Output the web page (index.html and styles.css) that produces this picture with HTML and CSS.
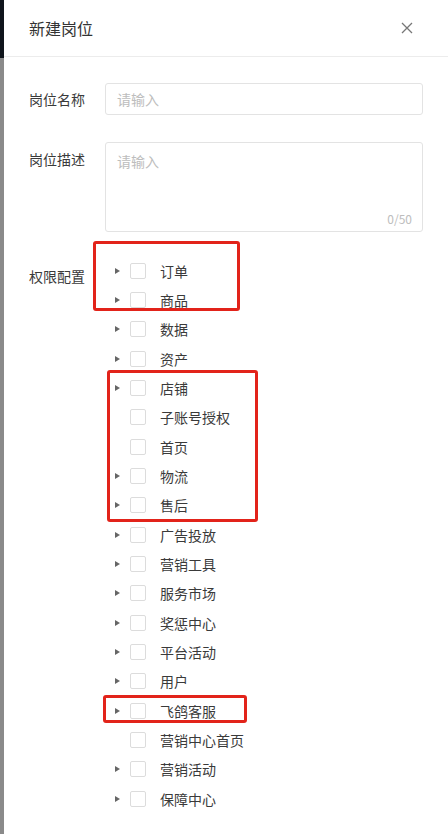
FILE: index.html
```html
<!DOCTYPE html>
<html lang="zh-CN">
<head>
<meta charset="utf-8">
<title>新建岗位</title>
<link rel="stylesheet" href="styles.css">
</head>
<body>
<div class="page">
  <div class="mask-strip"></div>
  <div class="drawer">
    <div class="drawer-header">
      <span class="drawer-title">新建岗位</span>
      <span class="close" aria-label="关闭">
        <svg width="12" height="12" viewBox="0 0 12 12"><path d="M1 1 L11 11 M11 1 L1 11" stroke="#777" stroke-width="1.3" fill="none"/></svg>
      </span>
    </div>
    <div class="drawer-body">
      <div class="form-row row-name">
        <label class="form-label">岗位名称</label>
        <div class="form-control">
          <div class="input"><span class="placeholder">请输入</span></div>
        </div>
      </div>
      <div class="form-row row-desc">
        <label class="form-label">岗位描述</label>
        <div class="form-control">
          <div class="textarea"><span class="placeholder">请输入</span><span class="count">0/50</span></div>
        </div>
      </div>
      <div class="form-row row-tree">
        <label class="form-label tree-label">权限配置</label>
        <div class="form-control">
          <ul class="tree">
            <li class="node"><span class="switcher"><i class="caret"></i></span><span class="checkbox"></span><span class="title">订单</span></li>
            <li class="node"><span class="switcher"><i class="caret"></i></span><span class="checkbox"></span><span class="title">商品</span></li>
            <li class="node"><span class="switcher"><i class="caret"></i></span><span class="checkbox"></span><span class="title">数据</span></li>
            <li class="node"><span class="switcher"><i class="caret"></i></span><span class="checkbox"></span><span class="title">资产</span></li>
            <li class="node"><span class="switcher"><i class="caret"></i></span><span class="checkbox"></span><span class="title">店铺</span></li>
            <li class="node"><span class="switcher"></span><span class="checkbox"></span><span class="title">子账号授权</span></li>
            <li class="node"><span class="switcher"></span><span class="checkbox"></span><span class="title">首页</span></li>
            <li class="node"><span class="switcher"><i class="caret"></i></span><span class="checkbox"></span><span class="title">物流</span></li>
            <li class="node"><span class="switcher"><i class="caret"></i></span><span class="checkbox"></span><span class="title">售后</span></li>
            <li class="node"><span class="switcher"><i class="caret"></i></span><span class="checkbox"></span><span class="title">广告投放</span></li>
            <li class="node"><span class="switcher"><i class="caret"></i></span><span class="checkbox"></span><span class="title">营销工具</span></li>
            <li class="node"><span class="switcher"><i class="caret"></i></span><span class="checkbox"></span><span class="title">服务市场</span></li>
            <li class="node"><span class="switcher"><i class="caret"></i></span><span class="checkbox"></span><span class="title">奖惩中心</span></li>
            <li class="node"><span class="switcher"><i class="caret"></i></span><span class="checkbox"></span><span class="title">平台活动</span></li>
            <li class="node"><span class="switcher"><i class="caret"></i></span><span class="checkbox"></span><span class="title">用户</span></li>
            <li class="node"><span class="switcher"><i class="caret"></i></span><span class="checkbox"></span><span class="title">飞鸽客服</span></li>
            <li class="node"><span class="switcher"></span><span class="checkbox"></span><span class="title">营销中心首页</span></li>
            <li class="node"><span class="switcher"><i class="caret"></i></span><span class="checkbox"></span><span class="title">营销活动</span></li>
            <li class="node"><span class="switcher"><i class="caret"></i></span><span class="checkbox"></span><span class="title">保障中心</span></li>
          </ul>
        </div>
      </div>
    </div>
    <div class="mark mark-1"></div>
    <div class="mark mark-2"></div>
    <div class="mark mark-3"></div>
  </div>
</div>
</body>
</html>
```

FILE: styles.css
```css
* { box-sizing: border-box; }
html, body { margin: 0; padding: 0; }
body {
  width: 448px;
  height: 834px;
  overflow: hidden;
  background: #fff;
  font-family: "Noto Sans CJK SC", "Noto Sans", "Liberation Sans", sans-serif;
  color: #333;
}
.page {
  display: flex;
  width: 448px;
  height: 834px;
}
.mask-strip {
  width: 4px;
  flex: 0 0 4px;
  background: linear-gradient(to bottom, #10151c 0, #10151c 58px, #8a8a8a 58px, #8a8a8a 100%);
}
.drawer {
  position: relative;
  flex: 1;
  background: #fff;
}
.drawer-header {
  height: 57px;
  display: flex;
  align-items: center;
  justify-content: space-between;
  padding: 0 35px 0 25px;
  border-bottom: 1px solid #ececec;
}
.drawer-title {
  font-size: 16px;
  line-height: 22px;
  color: #333;
}
.close {
  display: flex;
  width: 12px;
  height: 12px;
}
.drawer-body {
  padding: 26px 25px 0 25px;
}
.form-row {
  display: flex;
}
.form-label {
  width: 76px;
  flex: 0 0 76px;
  font-size: 14px;
  color: #3a3a3a;
}
.form-control {
  flex: 1;
}
.row-name .form-label {
  line-height: 32px;
}
.row-desc {
  margin-top: 27px;
}
.row-desc .form-label {
  padding-top: 6px;
  line-height: 22px;
}
.input {
  height: 32px;
  border: 1px solid #e3e3e3;
  border-radius: 3px;
  padding: 0 11px;
  display: flex;
  align-items: center;
}
.placeholder {
  font-size: 14px;
  color: #bdbdbd;
}
.textarea {
  position: relative;
  height: 90px;
  border: 1px solid #e3e3e3;
  border-radius: 3px;
  padding: 6px 11px;
  line-height: 22px;
}
.count {
  position: absolute;
  right: 10px;
  bottom: 3px;
  font-size: 12px;
  line-height: 18px;
  color: #bdbdbd;
}
.row-tree {
  margin-top: 24px;
}
.tree-label {
  padding-top: 9px;
  line-height: 22px;
}
.tree {
  list-style: none;
  margin: 0;
  padding: 0;
}
.node {
  height: 29.33px;
  display: flex;
  align-items: center;
}
.switcher {
  width: 25px;
  flex: 0 0 25px;
  height: 16px;
  display: flex;
  align-items: center;
  padding-left: 10px;
}
.caret {
  width: 0;
  height: 0;
  border-left: 5px solid #666;
  border-top: 3.5px solid transparent;
  border-bottom: 3.5px solid transparent;
}
.checkbox {
  width: 16px;
  height: 16px;
  flex: 0 0 16px;
  border: 1px solid #dcdcdc;
  border-radius: 2px;
  background: #fff;
  margin-right: 14px;
}
.title {
  font-size: 14px;
  line-height: 22px;
  color: #3a3a3a;
  white-space: nowrap;
}
.mark {
  position: absolute;
  border: 3px solid #e2231a;
  border-radius: 3px;
  pointer-events: none;
}
.mark-1 {
  left: 89px;
  top: 241px;
  width: 147px;
  height: 70px;
}
.mark-2 {
  left: 103px;
  top: 370px;
  width: 151px;
  height: 152px;
}
.mark-3 {
  left: 99px;
  top: 695px;
  width: 144px;
  height: 28px;
}
```
